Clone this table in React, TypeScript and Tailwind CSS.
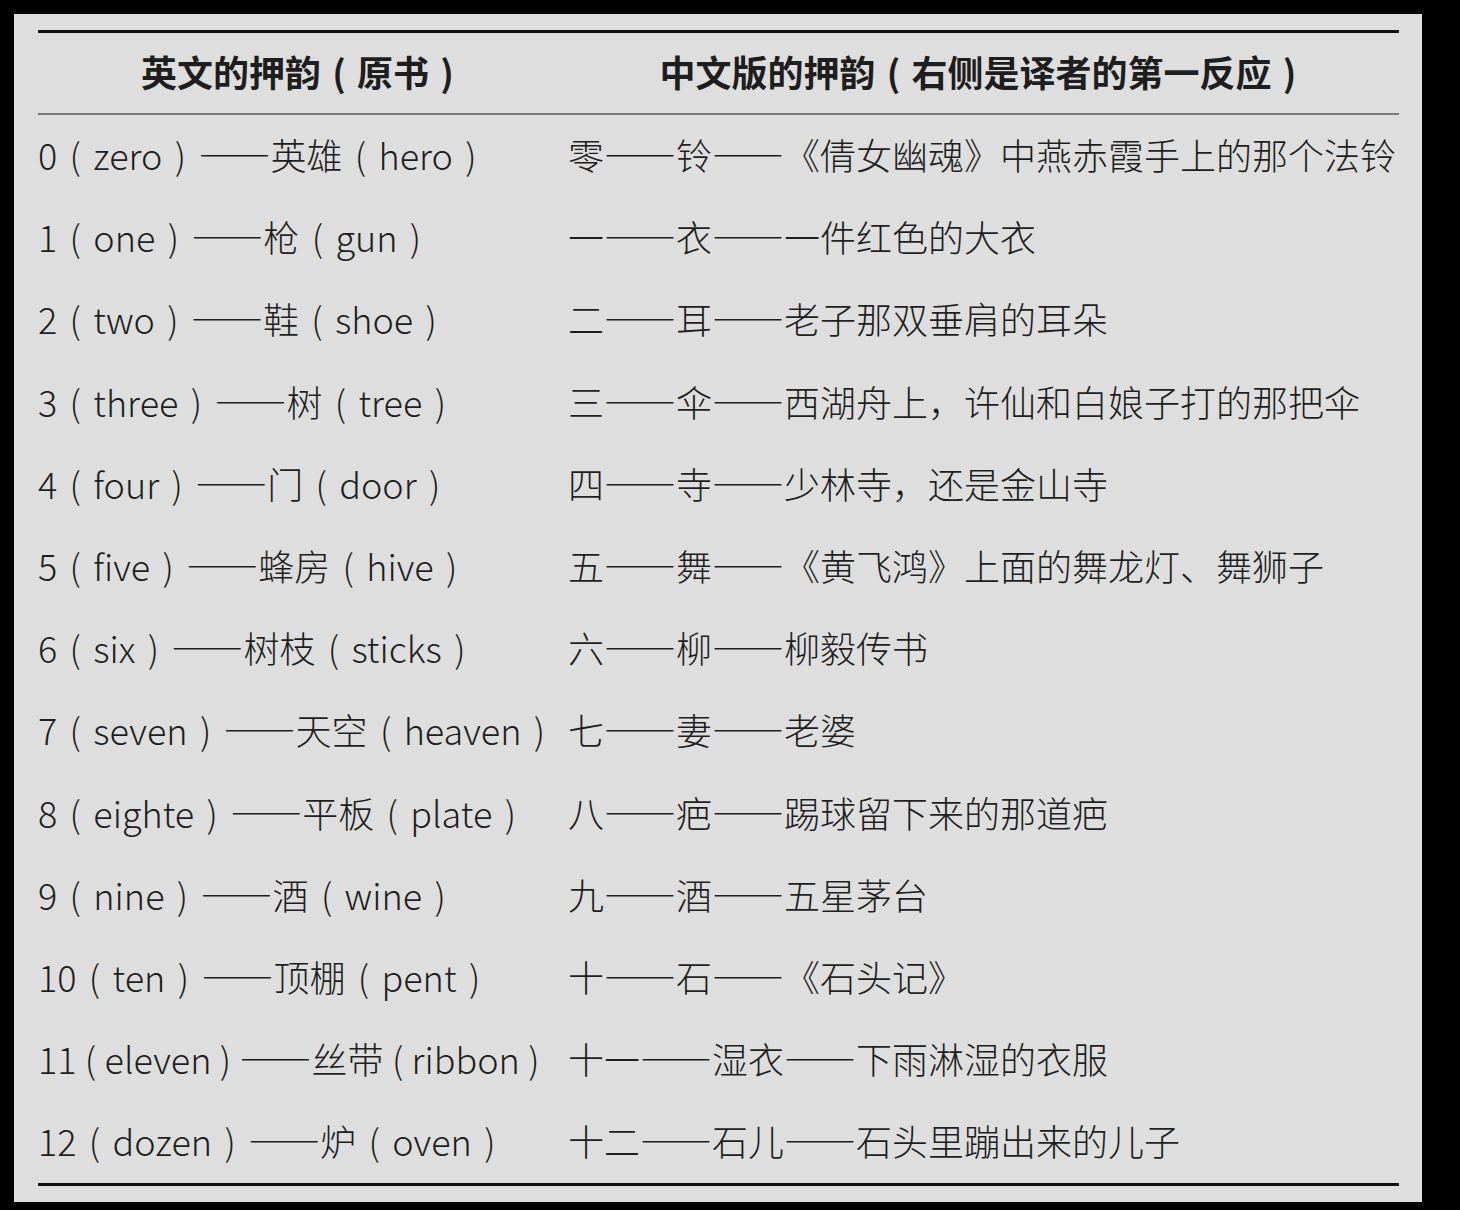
import type { ReactNode } from "react";

const rows: [string, string][] = [
  ["0（zero）——英雄（hero）", "零——铃——《倩女幽魂》中燕赤霞手上的那个法铃"],
  ["1（one）——枪（gun）", "一——衣——一件红色的大衣"],
  ["2（two）——鞋（shoe）", "二——耳——老子那双垂肩的耳朵"],
  ["3（three）——树（tree）", "三——伞——西湖舟上，许仙和白娘子打的那把伞"],
  ["4（four）——门（door）", "四——寺——少林寺，还是金山寺"],
  ["5（five）——蜂房（hive）", "五——舞——《黄飞鸿》上面的舞龙灯、舞狮子"],
  ["6（six）——树枝（sticks）", "六——柳——柳毅传书"],
  ["7（seven）——天空（heaven）", "七——妻——老婆"],
  ["8（eighte）——平板（plate）", "八——疤——踢球留下来的那道疤"],
  ["9（nine）——酒（wine）", "九——酒——五星茅台"],
  ["10（ten）——顶棚（pent）", "十——石——《石头记》"],
  ["11（eleven）——丝带（ribbon）", "十一——湿衣——下雨淋湿的衣服"],
  ["12（dozen）——炉（oven）", "十二——石儿——石头里蹦出来的儿子"],
];

// full-width parens centred in their box, em dashes at full width
function typeset(text: string, tight = false): ReactNode[] {
  return text.split(/(（|）|——)/).filter(Boolean).map((part, i) => {
    if (part === "（" || part === "）")
      return (
        <span key={i} className={tight ? "inline-block w-[28px] text-center" : "inline-block w-[36px] text-center"}>
          {part === "（" ? "(" : ")"}
        </span>
      );
    if (part === "——")
      return (
        <span key={i} className="[font-feature-settings:'fwid']">
          ——
        </span>
      );
    return <span key={i}>{part}</span>;
  });
}

export default function App() {
  return (
    <div className="w-[1460px] h-[1210px] bg-black pt-[14px] pl-[14px]">
      <div
        className="w-[1408px] h-[1188px] bg-[#dedede] pt-[16px] pl-[24px] pr-[23px] text-[#1e1e1e]"
        style={{ fontFamily: '"Noto Sans CJK SC", "Noto Sans", sans-serif' }}
      >
        <div className="border-t-[3px] border-[#111]" />
        <div className="grid grid-cols-[530px_1fr] h-[80px] pb-[4px] items-center text-[36px] font-bold leading-none">
          <div className="text-center">{typeset("英文的押韵（原书）")}</div>
          <div className="text-center">{typeset("中文版的押韵（右侧是译者的第一反应）")}</div>
        </div>
        <div className="border-t-2 border-[#7a7a7a]" />
        <div>
          {rows.map(([en, zh], i) => (
            <div
              key={en}
              className="grid grid-cols-[530px_1fr] h-[82.2px] pb-[4px] items-center text-[36px] font-light leading-none whitespace-nowrap"
            >
              <div>{typeset(en, i === 11)}</div>
              <div>{typeset(zh)}</div>
            </div>
          ))}
        </div>
        <div className="border-t-[3px] border-[#111]" />
      </div>
    </div>
  );
}
